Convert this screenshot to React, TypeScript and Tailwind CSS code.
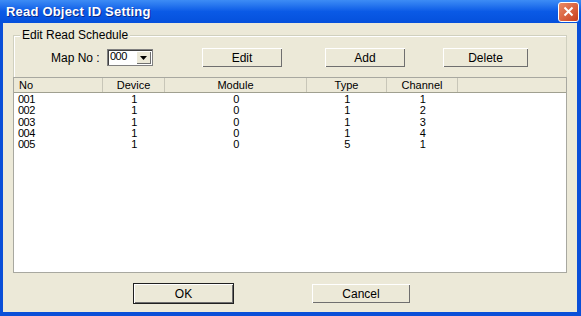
import React from 'react';

const rows = [
  { no: '001', device: '1', module: '0', type: '1', channel: '1' },
  { no: '002', device: '1', module: '0', type: '1', channel: '2' },
  { no: '003', device: '1', module: '0', type: '1', channel: '3' },
  { no: '004', device: '1', module: '0', type: '1', channel: '4' },
  { no: '005', device: '1', module: '0', type: '5', channel: '1' },
];

const Btn: React.FC<{ label: string; className?: string; isDefault?: boolean }> = ({ label, className = '', isDefault }) => (
  <button
    className={`h-[21px] bg-[#ece9d8] text-[12px] text-black border ${
      isDefault ? 'border-[#202020]' : 'border-[#ece9d8]'
    } shadow-[inset_1px_1px_0_#ffffff,inset_-1px_-1px_0_#6f6f6f] flex items-center justify-center ${className}`}
  >
    {label}
  </button>
);

const App: React.FC = () => {
  return (
    <div className="w-[581px] h-[316px] bg-[#0a4fd8] flex flex-col font-['Liberation_Sans',Arial,sans-serif] overflow-hidden">
      {/* Title bar */}
      <div className="h-[23px] flex items-center justify-between pl-[6px] pr-[2px] bg-gradient-to-b from-[#3d8cf5] via-[#0a5ae6] to-[#0550dc]">
        <span className="text-white font-bold text-[13px] tracking-[0.2px] [text-shadow:1px_1px_0_#0a2a8a]">Read Object ID Setting</span>
        <div className="w-[21px] h-[20px] rounded-[3px] border border-white bg-gradient-to-br from-[#ea8a66] to-[#c83c1a] flex items-center justify-center">
          <svg width="11" height="11" viewBox="0 0 11 11">
            <path d="M1.5 1.5 L9.5 9.5 M9.5 1.5 L1.5 9.5" stroke="#ffffff" strokeWidth="2" />
          </svg>
        </div>
      </div>

      {/* Body */}
      <div className="flex-1 ml-[3px] mr-[4px] mb-[4px] bg-[#ece9d8] flex flex-col px-[10px] text-black">
        {/* Group box */}
        <div className="mt-[12px] h-[42px] border-t border-l border-r border-[#d0d0bf] shadow-[inset_1px_1px_0_#ffffff] relative">
          <span className="absolute -top-[8px] left-[6px] px-[2px] bg-[#ece9d8] text-[12px] leading-[14px]">Edit Read Schedule</span>
          <div className="flex items-center pt-[11px] pl-[37px]">
            <span className="w-[56px] text-[12px]">Map No :</span>
            <div className="w-[46px] h-[17px] bg-white border border-[#7f7f7f] shadow-[inset_1px_1px_0_#404040] flex items-center justify-between pl-[2px] pr-[1px]">
              <span className="text-[11px] leading-[11px] -mt-[2px] tracking-[-0.5px]">000</span>
              <div className="w-[15px] h-[13px] bg-[#ece9d8] shadow-[inset_1px_1px_0_#ffffff,inset_-1px_-1px_0_#6f6f6f] flex items-center justify-center">
                <svg width="7" height="4" viewBox="0 0 7 4">
                  <path d="M0 0 H7 L3.5 4 Z" fill="#000000" />
                </svg>
              </div>
            </div>
            <Btn label="Edit" className="ml-[48px] w-[82px]" />
            <Btn label="Add" className="ml-[41px] w-[82px]" />
            <Btn label="Delete" className="ml-[36px] w-[87px]" />
          </div>
        </div>

        {/* List view */}
        <div className="h-[196px] bg-white border border-[#a8a8a0] flex flex-col text-[11px]">
          <div className="h-[15px] flex bg-[#ece9d8] border-b border-[#a0a090] leading-[14px]">
            <div className="w-[89px] pl-[5px] border-r border-[#c8c6b8]">No</div>
            <div className="w-[62px] text-center border-r border-[#c8c6b8]">Device</div>
            <div className="w-[142px] text-center border-r border-[#c8c6b8]">Module</div>
            <div className="w-[80px] text-center border-r border-[#c8c6b8]">Type</div>
            <div className="w-[71px] text-center border-r border-[#c8c6b8]">Channel</div>
            <div className="flex-1" />
          </div>
          <div className="pt-[1px] text-[11px] tracking-[-0.5px]">
            {rows.map((r) => (
              <div key={r.no} className="flex h-[11.25px] leading-[11.25px]">
                <div className="w-[89px] pl-[4px]">{r.no}</div>
                <div className="w-[62px] text-center">{r.device}</div>
                <div className="w-[142px] text-center">{r.module}</div>
                <div className="w-[80px] text-center">{r.type}</div>
                <div className="w-[71px] text-center">{r.channel}</div>
              </div>
            ))}
          </div>
        </div>

        {/* Dialog buttons */}
        <div className="flex mt-[10px]">
          <Btn label="OK" isDefault className="ml-[120px] w-[101px]" />
          <Btn label="Cancel" className="ml-[77px] w-[100px]" />
        </div>
      </div>
    </div>
  );
};

export default App;
